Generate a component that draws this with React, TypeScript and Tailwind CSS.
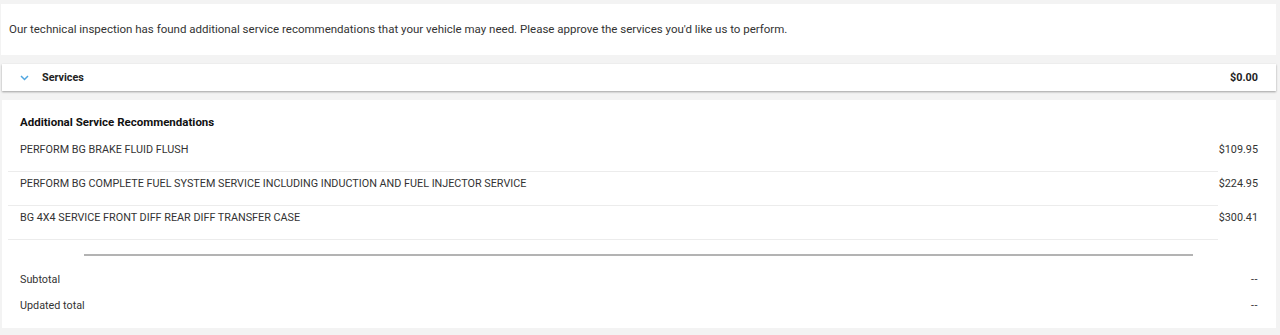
import React from "react";

const rows = [
  { name: "PERFORM BG BRAKE FLUID FLUSH", price: "$109.95" },
  { name: "PERFORM BG COMPLETE FUEL SYSTEM SERVICE INCLUDING INDUCTION AND FUEL INJECTOR SERVICE", price: "$224.95" },
  { name: "BG 4X4 SERVICE FRONT DIFF REAR DIFF TRANSFER CASE", price: "$300.41" },
];

export default function App() {
  return (
    <div
      className="w-[1280px] h-[335px] bg-[#f3f3f3] text-[#333] overflow-hidden pt-[4px]"
      style={{ fontFamily: "Roboto, 'Liberation Sans', sans-serif" }}
    >
      <div className="ml-[1px] mr-[4px] h-[51px] bg-white flex items-center pl-[8px] text-[11.5px]">
        Our technical inspection has found additional service recommendations that your vehicle may need. Please approve the services you'd like us to perform.
      </div>
      <div className="mt-[9px] ml-[2px] mr-[4px] h-[27px] bg-white flex items-center pt-[1px] shadow-[0_1px_2px_rgba(0,0,0,0.35)]">
        <svg width="9" height="6" viewBox="0 0 9 6" className="ml-[18px]">
          <path d="M1 1 L4.5 4.5 L8 1" fill="none" stroke="#4fa6e0" strokeWidth="1.5" />
        </svg>
        <span className="ml-[13px] text-[10.8px] font-bold text-[#222]">Services</span>
        <span className="ml-auto mr-[18px] text-[10.8px] font-bold text-[#222]">$0.00</span>
      </div>
      <div className="mt-[9px] ml-[2px] mr-[4px] h-[228px] bg-white pl-[6px] pt-[15px]">
        <div className="pl-[12px] text-[11.5px] font-bold text-[#111] leading-[14px]">Additional Service Recommendations</div>
        <div className="mt-[9px]">
          {rows.map((r) => (
            <div key={r.name} className="flex">
              <div className="w-[1210px] h-[34px] border-b border-[#ececec] pl-[12px] pt-[5px] text-[10.8px] text-[#333] leading-[14px]">
                {r.name}
              </div>
              <div className="flex-1 pt-[5px] pr-[18px] text-right text-[10.8px] leading-[14px] text-[#333]">{r.price}</div>
            </div>
          ))}
        </div>
        <div className="mt-[14px] ml-[76px] w-[1109px] h-[2px] bg-[#b3b3b3]" />
        <div className="mt-[17px] pl-[12px] pr-[18px] flex justify-between text-[10.8px] leading-[14px] text-[#333]">
          <span>Subtotal</span>
          <span className="tracking-[0.5px]">--</span>
        </div>
        <div className="mt-[12px] pl-[12px] pr-[18px] flex justify-between text-[10.8px] leading-[14px] text-[#333]">
          <span>Updated total</span>
          <span className="tracking-[0.5px]">--</span>
        </div>
      </div>
    </div>
  );
}
